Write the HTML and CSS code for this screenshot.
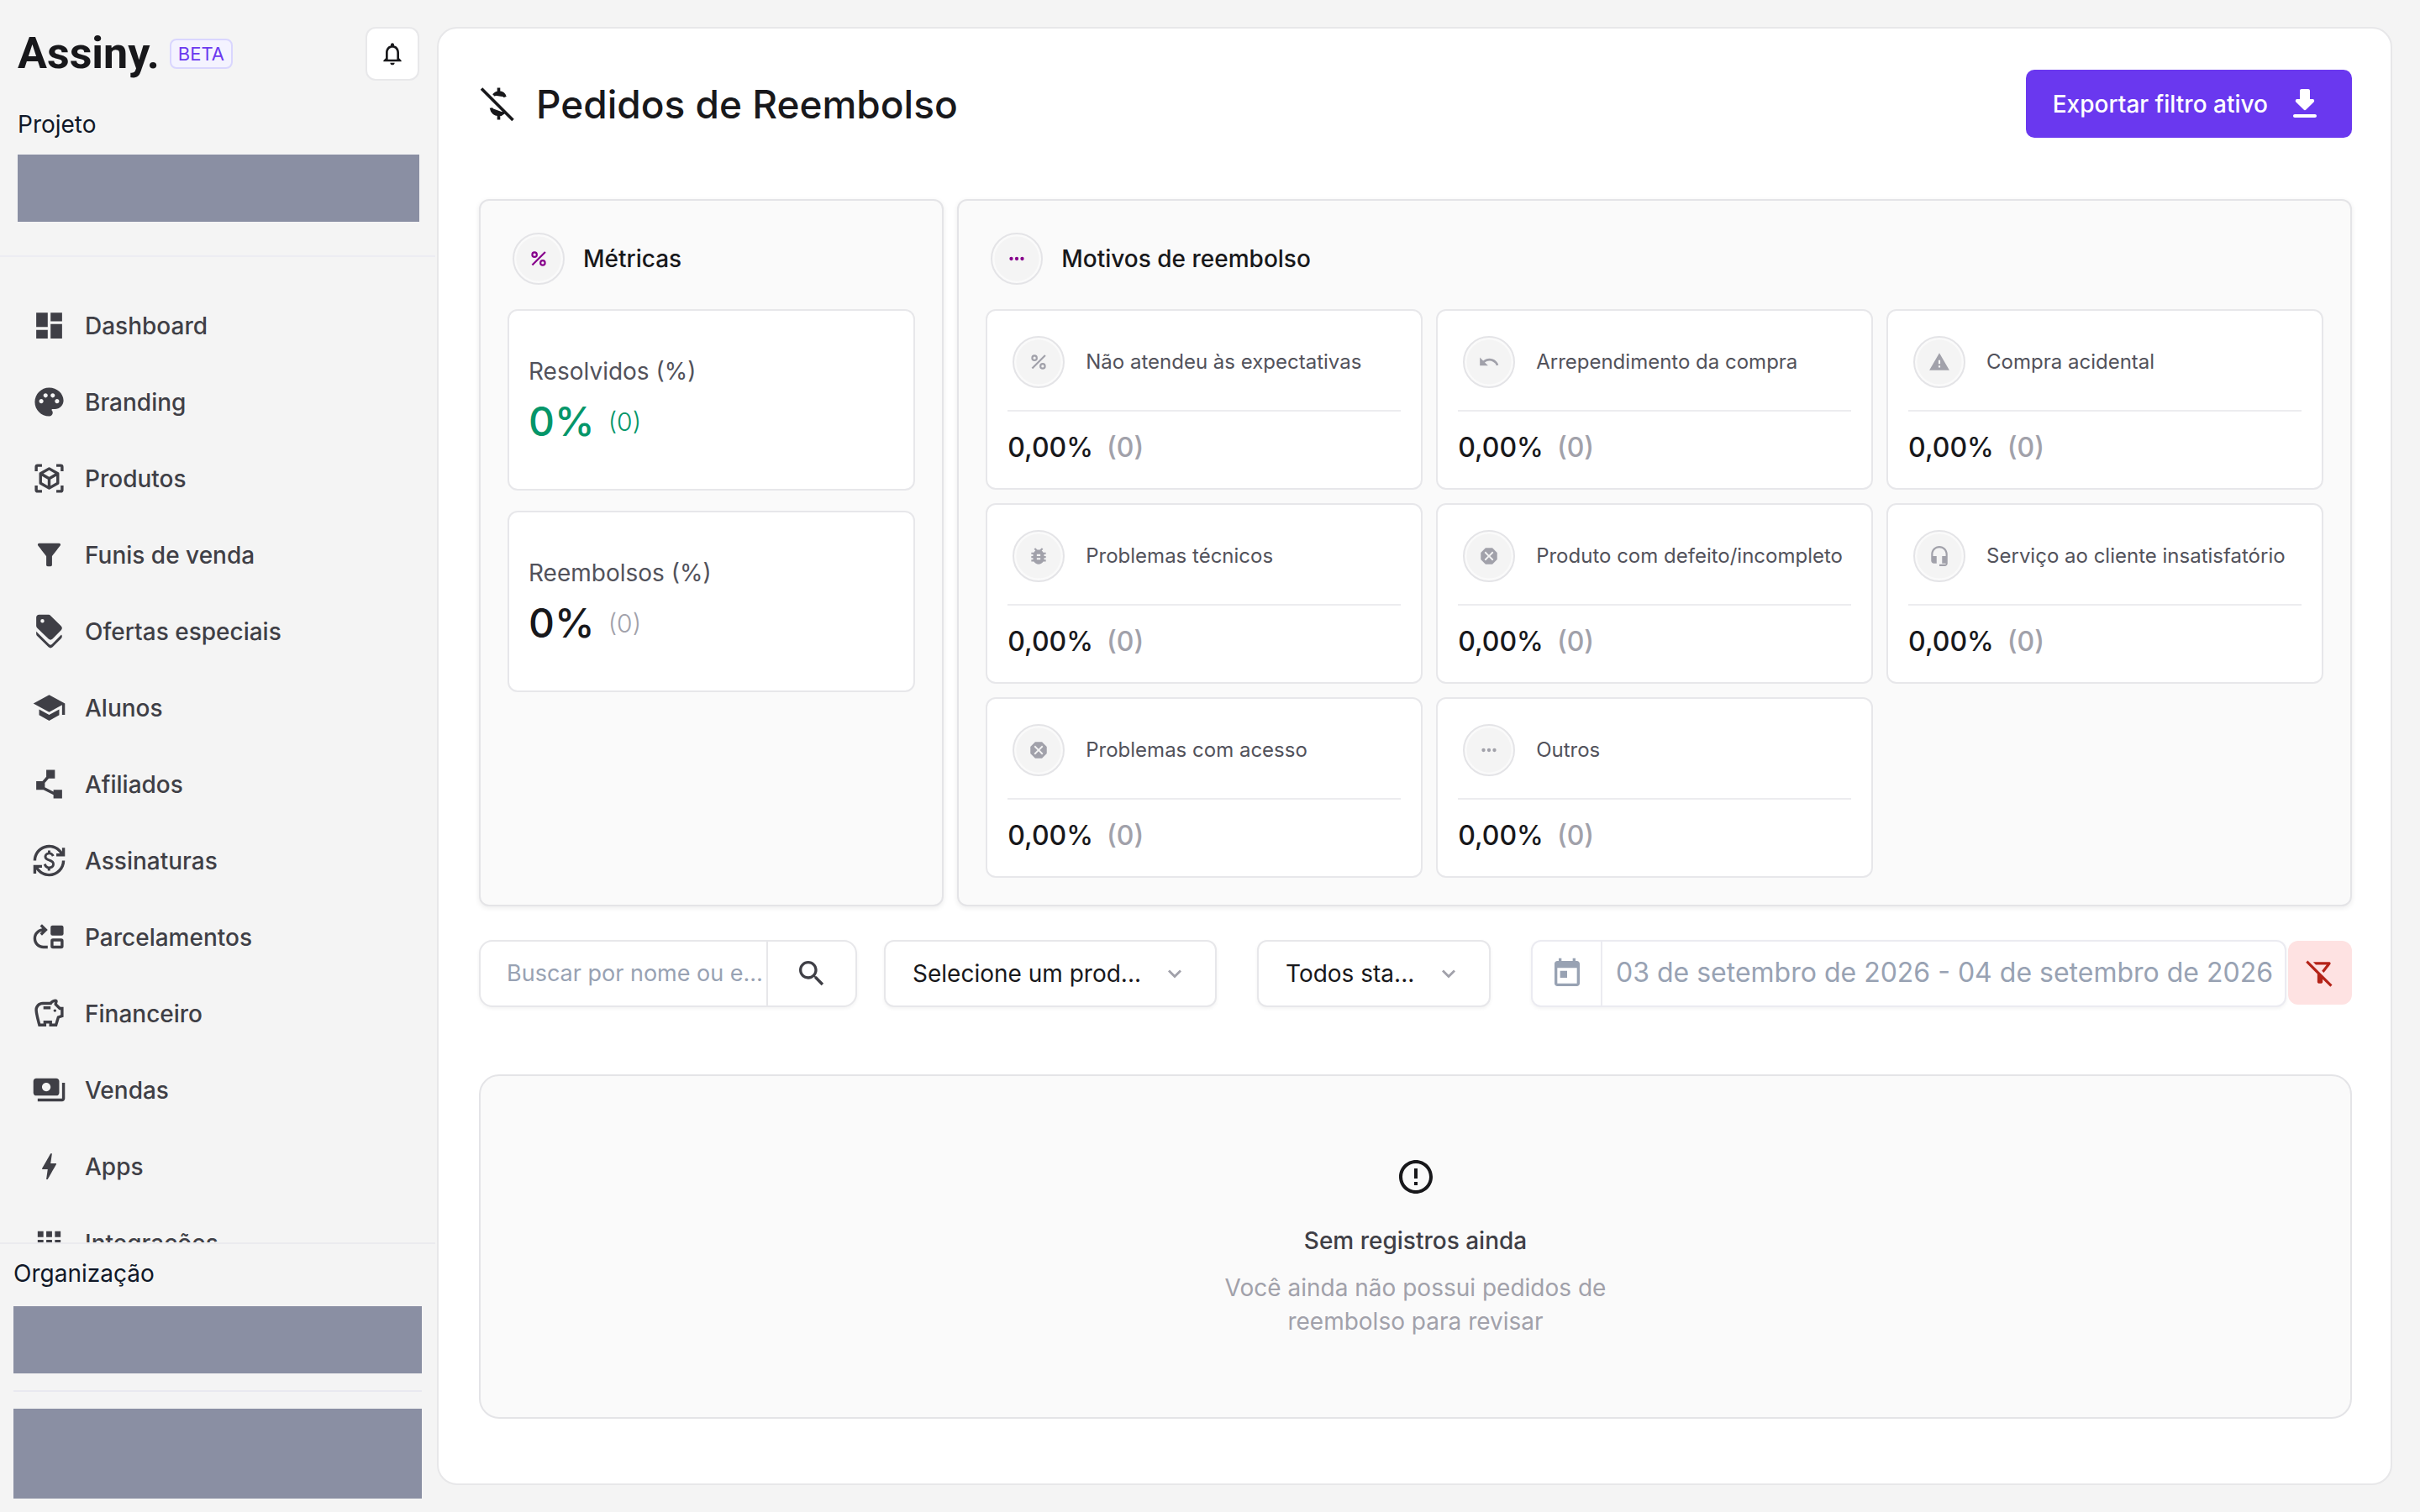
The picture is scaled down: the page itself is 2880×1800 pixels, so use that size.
FILE: index.html
```html
<!DOCTYPE html>
<html lang="pt-BR">
<head>
<meta charset="utf-8">
<meta name="viewport" content="width=device-width, initial-scale=1">
<title>Assiny - Pedidos de Reembolso</title>
<link rel="stylesheet" href="styles.css">
</head>
<body>
<svg class="sprite" aria-hidden="true">
  <symbol id="i-percent" viewBox="0 0 24 24"><path d="M5 19 19.300 4.700" stroke="currentColor" stroke-width="2" fill="none"/><circle cx="7.500" cy="7.500" r="2.500" fill="none" stroke="currentColor" stroke-width="2"/><circle cx="16.500" cy="16.500" r="2.500" fill="none" stroke="currentColor" stroke-width="2"/></symbol>
  <symbol id="i-more" viewBox="0 0 24 24"><circle cx="6" cy="12" r="2"/><circle cx="12" cy="12" r="2"/><circle cx="18" cy="12" r="2"/></symbol>
  <symbol id="i-undo" viewBox="0 0 24 24"><path d="M12.500 8c-2.650 0-5.050.99-6.900 2.600L2 7v9h9l-3.620-3.620c1.390-1.160 3.160-1.880 5.120-1.880 3.540 0 6.550 2.310 7.600 5.500l2.370-.78C21.080 11.030 17.150 8 12.500 8z"/></symbol>
  <symbol id="i-warning" viewBox="0 0 24 24"><path d="M1 21h22L12 2 1 21zm12-3h-2v-2h2v2zm0-4h-2v-4h2v4z"/></symbol>
  <symbol id="i-bug" viewBox="0 0 24 24"><path d="M20 8h-2.810c-.45-.78-1.070-1.450-1.820-1.960L17 4.410 15.590 3l-2.170 2.170C12.960 5.060 12.490 5 12 5c-.49 0-.96.06-1.410.17L8.410 3 7 4.410l1.620 1.630C7.880 6.550 7.260 7.220 6.810 8H4v2h2.090c-.05.33-.09.66-.09 1v1H4v2h2v1c0 .34.04.67.09 1H4v2h2.810c1.040 1.790 2.970 3 5.190 3s4.150-1.210 5.190-3H20v-2h-2.090c.05-.33.09-.66.09-1v-1h2v-2h-2v-1c0-.34-.04-.67-.09-1H20V8zm-6 8h-4v-2h4v2zm0-4h-4v-2h4v2z"/></symbol>
  <symbol id="i-dangerous" viewBox="0 0 24 24"><path d="M15.730 3H8.270L3 8.270v7.460L8.270 21h7.460L21 15.730V8.270L15.730 3zM17 15.740 15.740 17 12 13.260 8.260 17 7 15.740 10.740 12 7 8.260 8.260 7 12 10.740 15.740 7 17 8.260 13.260 12 17 15.740z"/></symbol>
  <symbol id="i-headset" viewBox="0 0 24 24"><path d="M12 1c-4.970 0-9 4.030-9 9v7c0 1.660 1.340 3 3 3h3v-8H5v-2c0-3.870 3.130-7 7-7s7 3.130 7 7v2h-4v8h4v1h-7v2h6c1.660 0 3-1.340 3-3V10c0-4.970-4.030-9-9-9z"/></symbol>
  <symbol id="i-chevron" viewBox="0 0 24 24"><path d="M5 8.500 12 15.500 19 8.500" fill="none" stroke="currentColor" stroke-width="2.800"/></symbol>
</svg>

<div class="app">
  <aside class="sidebar">
    <header class="side-top">
      <div class="brand-row">
        <a class="brand" href="#">Assiny.</a>
        <span class="beta">BETA</span>
        <button class="bell" type="button" aria-label="Notificações"><svg viewBox="0 0 24 24"><path d="M12 22c1.100 0 2-.9 2-2h-4c0 1.100.9 2 2 2zm6-6v-5c0-3.070-1.630-5.640-4.500-6.320V4c0-.83-.67-1.500-1.500-1.500s-1.500.67-1.500 1.500v.68C7.640 5.360 6 7.920 6 11v5l-2 2v1h16v-1l-2-2zm-2 1H8v-6c0-2.480 1.510-4.500 4-4.500s4 2.020 4 4.500v6z"/></svg></button>
      </div>
      <p class="side-label">Projeto</p>
      <div class="mask"></div>
    </header>

    <nav class="nav">
      <a href="#"><svg viewBox="0 0 24 24"><path d="M3 13h8V3H3v10zm0 8h8v-6H3v6zm10 0h8V11h-8v10zm0-18v6h8V3h-8z"/></svg>Dashboard</a>
      <a href="#"><svg viewBox="0 0 24 24"><path d="M12 2C6.490 2 2 6.490 2 12s4.490 10 10 10c1.380 0 2.500-1.120 2.500-2.500 0-.61-.23-1.200-.64-1.670-.08-.1-.13-.21-.13-.33 0-.28.22-.5.5-.5H16c3.310 0 6-2.690 6-6 0-4.960-4.490-9-10-9zm5.500 11c-.83 0-1.500-.67-1.500-1.500s.67-1.500 1.500-1.500 1.500.67 1.500 1.500-.67 1.500-1.500 1.500zm-3-4c-.83 0-1.500-.67-1.500-1.500S13.670 6 14.500 6s1.500.67 1.500 1.500S15.330 9 14.500 9zM5 11.500c0-.83.67-1.500 1.500-1.500s1.500.67 1.500 1.500S7.330 13 6.500 13 5 12.330 5 11.500zm6-4c0 .83-.67 1.500-1.500 1.500S8 8.330 8 7.500 8.670 6 9.500 6s1.500.67 1.500 1.500z"/></svg>Branding</a>
      <a href="#"><svg viewBox="0 0 24 24"><g fill="none" stroke="currentColor" stroke-width="2"><path d="M7 3H4Q3 3 3 4v3M17 3h3q1 0 1 1v3M7 21H4q-1 0-1-1v-3M17 21h3q1 0 1-1v-3"/><path d="M12 5.200 18 8.600v6.800L12 18.800 6 15.400V8.600zM6 8.600l6 3.500 6-3.500M12 12.100v6.700" stroke-linejoin="round"/></g></svg>Produtos</a>
      <a href="#"><svg viewBox="0 0 24 24"><path d="M4.250 5.610C6.270 8.200 10 13 10 13v6c0 .55.45 1 1 1h2c.55 0 1-.45 1-1v-6s3.720-4.800 5.740-7.390A.998.998 0 0 0 18.950 4H5.040c-.83 0-1.300.95-.79 1.610z"/></svg>Funis de venda</a>
      <a href="#"><svg viewBox="0 0 24 24"><path fill-rule="evenodd" d="M5 .5h6.600c.6 0 1 .2 1.400.6l7.300 7.300c.9.9.9 1.900 0 2.800l-5.900 6.100c-.9.900-2 .9-2.900 0L3.600 9.600C3.200 9.200 3 8.700 3 8.200V2.500c0-1.200.8-2 2-2zm2.300 3a1.300 1.300 0 1 0 0 2.600 1.300 1.300 0 0 0 0-2.600zM3 12.200l9 8.900c.6.6 1.300.6 1.900 0l6.600-6.700c.7.9.6 1.900-.2 2.700l-5.900 5.900c-.9.9-2 .9-2.900 0L3.600 15.200c-.4-.4-.6-.9-.6-1.500z"/></svg>Ofertas especiais</a>
      <a href="#"><svg viewBox="0 0 24 24"><path d="M5 13.180v4L12 21l7-3.820v-4L12 17l-7-3.820zM12 3L1 9l11 6 9-4.910V17h2V9L12 3z"/></svg>Alunos</a>
      <a href="#"><svg viewBox="0 0 24 24"><path d="M15 16v1.260l-6-3v-3.170L11.700 8H16V2h-6v4.900L7.300 10H3v6h5l7 3.500V22h6v-6H15z"/></svg>Afiliados</a>
      <a href="#"><svg viewBox="0 0 24 24"><path d="M12.890 11.100c-1.780-.59-2.640-.96-2.640-1.900 0-1.020 1.110-1.390 1.810-1.390 1.310 0 1.790.99 1.900 1.340l1.580-.67c-.15-.44-.82-1.910-2.660-2.230V5h-1.750v1.260c-2.600.56-2.620 2.850-2.620 2.960 0 2.270 2.250 2.910 3.350 3.310 1.580.56 2.280 1.070 2.280 2.030 0 1.130-1.050 1.610-1.980 1.610-1.820 0-2.340-1.870-2.400-2.090l-1.660.67c.63 2.190 2.280 2.780 2.900 2.960V19h1.750v-1.240c.52-.09 3.020-.59 3.020-3.220.01-1.390-.6-2.610-2.880-3.440zM3 21H1v-6h6v2H4.520c1.610 2.410 4.360 4 7.480 4 4.970 0 9-4.030 9-9h2c0 6.080-4.920 11-11 11-3.720 0-7.010-1.850-9-4.670V21zm-2-9C1 5.920 5.920 1 12 1c3.720 0 7.010 1.850 9 4.670V3h2v6h-6V7h2.480C17.870 4.590 15.120 3 12 3c-4.970 0-9 4.030-9 9H1z"/></svg>Assinaturas</a>
      <a href="#"><svg viewBox="0 0 24 24"><path d="M3 13c0-2.450 1.760-4.470 4.080-4.910L5.590 9.580 7 11l4-4.010L7 3 5.590 4.410l1.580 1.580v.06C3.700 6.460 1 9.420 1 13c0 3.870 3.130 7 7 7h3v-2H8c-2.760 0-5-2.240-5-5z"/><rect x="13" y="4" width="9" height="7" rx="1.300"/><rect x="14" y="14" width="7" height="5" rx=".6" fill="none" stroke="currentColor" stroke-width="2"/></svg>Parcelamentos</a>
      <a href="#"><svg viewBox="0 0 24 24"><path fill-rule="evenodd" d="M15 10c0-.55.45-1 1-1s1 .45 1 1-.45 1-1 1-1-.45-1-1zM8 9h5V7H8v2zm14-1.500v6.970l-2.820.94L17.500 21H12v-2h-2v2H4.500S2 12.540 2 9.500 4.460 4 7.500 4h5c.91-1.210 2.360-2 4-2 .83 0 1.500.67 1.500 1.500 0 .21-.04.41-.12.59-.14.34-.26.73-.32 1.150l2.270 2.260H22zm-2 2h-1L15.500 6c0-.65.09-1.290.26-1.910-.97.25-1.760.97-2.090 1.910H7.500C5.570 6 4 7.570 4 9.500c0 1.880 1.220 6.650 2.010 9.500H8v-2h6v2h2.010l1.550-5.150 2.440-.82V9.500z"/></svg>Financeiro</a>
      <a href="#"><svg viewBox="0 0 24 24"><path d="M19 14V6c0-1.100-.9-2-2-2H3c-1.100 0-2 .9-2 2v8c0 1.100.9 2 2 2h14c1.100 0 2-.9 2-2zm-9-1c-1.660 0-3-1.340-3-3s1.340-3 3-3 3 1.340 3 3-1.340 3-3 3zm13-6v11c0 1.100-.9 2-2 2H4v-2h17V7h2z"/></svg>Vendas</a>
      <a href="#"><svg viewBox="0 0 24 24"><path d="M11 21h-1l1-7H7.500c-.58 0-.57-.32-.38-.66C8.480 10.940 10.420 7.540 13 3h1l-1 7h3.500c.49 0 .56.33.47.51C12.960 17.550 11 21 11 21z"/></svg>Apps</a>
      <a href="#"><svg viewBox="0 0 24 24"><path d="M4 4h4v4H4zM10 4h4v4h-4zM16 4h4v4h-4zM4 10h4v4H4zM10 10h4v4h-4zM16 10h4v4h-4zM4 16h4v4H4zM10 16h4v4h-4zM16 16h4v4h-4z"/></svg>Integrações</a>
    </nav>

    <footer class="side-foot">
      <p class="side-label">Organização</p>
      <div class="mask"></div>
      <hr>
      <div class="mask mask-tall"></div>
    </footer>
  </aside>

  <main class="panel">
    <header class="page-head">
      <svg class="page-icon" viewBox="0 0 44 44" fill="none" stroke="currentColor" stroke-width="3.600"><path d="M3 3.600 40.500 41M23.500 2.500V9M17.500 11.500Q20.500 8 24 8q5.500 0 7 5.500M23.500 33v7.500M14.500 26.500q1.500 7.500 9 8 3.500 0 6-2.500"/></svg>
      <h1>Pedidos de Reembolso</h1>
      <button class="export" type="button">Exportar filtro ativo<svg viewBox="0 0 24 24"><path d="M16.590 9H15V4c0-.55-.45-1-1-1h-4c-.55 0-1 .45-1 1v5H7.410c-.89 0-1.340 1.080-.71 1.710l4.590 4.590c.39.39 1.020.39 1.410 0l4.590-4.590c.63-.63.19-1.710-.7-1.710zM5 19c0 .55.45 1 1 1h12c.55 0 1-.45 1-1s-.45-1-1-1H6c-.55 0-1 .45-1 1z"/></svg></button>
    </header>

    <div class="summary">
      <section class="card">
        <header class="card-head"><span class="disc disc-accent"><svg><use href="#i-percent"/></svg></span><h2>Métricas</h2></header>
        <div class="metrics">
          <div class="tile metric metric-ok"><p>Resolvidos (%)</p><div class="metric-value"><strong>0%</strong><span>(0)</span></div></div>
          <div class="tile metric"><p>Reembolsos (%)</p><div class="metric-value"><strong>0%</strong><span>(0)</span></div></div>
        </div>
      </section>

      <section class="card">
        <header class="card-head"><span class="disc disc-accent"><svg><use href="#i-more"/></svg></span><h2>Motivos de reembolso</h2></header>
        <div class="reasons">
          <div class="tile reason"><div class="reason-head"><span class="disc"><svg><use href="#i-percent"/></svg></span><p>Não atendeu às expectativas</p></div><div class="reason-value"><strong>0,00%</strong><span>(0)</span></div></div>
          <div class="tile reason"><div class="reason-head"><span class="disc"><svg><use href="#i-undo"/></svg></span><p>Arrependimento da compra</p></div><div class="reason-value"><strong>0,00%</strong><span>(0)</span></div></div>
          <div class="tile reason"><div class="reason-head"><span class="disc"><svg><use href="#i-warning"/></svg></span><p>Compra acidental</p></div><div class="reason-value"><strong>0,00%</strong><span>(0)</span></div></div>
          <div class="tile reason"><div class="reason-head"><span class="disc"><svg><use href="#i-bug"/></svg></span><p>Problemas técnicos</p></div><div class="reason-value"><strong>0,00%</strong><span>(0)</span></div></div>
          <div class="tile reason"><div class="reason-head"><span class="disc"><svg><use href="#i-dangerous"/></svg></span><p>Produto com defeito/incompleto</p></div><div class="reason-value"><strong>0,00%</strong><span>(0)</span></div></div>
          <div class="tile reason"><div class="reason-head"><span class="disc"><svg><use href="#i-headset"/></svg></span><p>Serviço ao cliente insatisfatório</p></div><div class="reason-value"><strong>0,00%</strong><span>(0)</span></div></div>
          <div class="tile reason"><div class="reason-head"><span class="disc"><svg><use href="#i-dangerous"/></svg></span><p>Problemas com acesso</p></div><div class="reason-value"><strong>0,00%</strong><span>(0)</span></div></div>
          <div class="tile reason"><div class="reason-head"><span class="disc"><svg><use href="#i-more"/></svg></span><p>Outros</p></div><div class="reason-value"><strong>0,00%</strong><span>(0)</span></div></div>
        </div>
      </section>
    </div>

    <form class="filters">
      <div class="filter-pair">
        <div class="field search">
          <input type="text" placeholder="Buscar por nome ou e…" aria-label="Buscar por nome ou e-mail">
          <button type="button" aria-label="Buscar"><svg viewBox="0 0 24 24"><path d="M15.500 14h-.79l-.28-.27C15.410 12.590 16 11.110 16 9.500 16 5.910 13.090 3 9.500 3S3 5.910 3 9.500 5.910 16 9.500 16c1.610 0 3.090-.59 4.230-1.570l.27.28v.79l5 4.990L20.490 19l-4.990-5zm-6 0C7.010 14 5 11.990 5 9.500S7.010 5 9.500 5 14 7.010 14 9.500 11.990 14 9.500 14z"/></svg></button>
        </div>
        <div class="field choice choice-product">
          <select aria-label="Produto"><option>Selecione um prod...</option></select>
          <svg><use href="#i-chevron"/></svg>
        </div>
      </div>
      <div class="field choice choice-status">
        <select aria-label="Status"><option>Todos sta...</option></select>
        <svg><use href="#i-chevron"/></svg>
      </div>
      <div class="period">
        <div class="field dates">
          <button type="button" aria-label="Abrir calendário"><svg viewBox="0 0 24 24"><path fill-rule="evenodd" d="M19 3h-1V1h-2v2H8V1H6v2H5c-1.110 0-2 .9-2 2v14c0 1.100.89 2 2 2h14c1.100 0 2-.9 2-2V5c0-1.100-.9-2-2-2zm0 16H5V8h14v11zM7 10h5v5H7z"/></svg></button>
          <input type="text" readonly aria-label="Período" value="03 de setembro de 2026 - 04 de setembro de 2026">
        </div>
        <button class="clear" type="button" aria-label="Limpar filtros"><svg viewBox="0 0 24 24"><path d="M16.950 6l-3.570 4.550 1.430 1.430c1.030-1.310 4.980-6.370 4.980-6.370A.998.998 0 0 0 19 4H6.830l2 2h8.120zM2.810 2.810 1.390 4.220 10 13v6c0 .55.45 1 1 1h2c.55 0 1-.45 1-1v-2.170l5.780 5.780 1.410-1.410L2.810 2.810z"/></svg></button>
      </div>
    </form>

    <section class="empty">
      <svg viewBox="0 0 24 24"><path d="M11 15h2v2h-2zm0-8h2v6h-2zm.99-5C6.470 2 2 6.480 2 12s4.470 10 9.990 10C17.520 22 22 17.520 22 12S17.520 2 11.990 2zM12 20c-4.420 0-8-3.580-8-8s3.580-8 8-8 8 3.580 8 8-3.580 8-8 8z"/></svg>
      <h3>Sem registros ainda</h3>
      <p>Você ainda não possui pedidos de reembolso para revisar</p>
    </section>
  </main>
</div>
</body>
</html>
```
FILE: styles.css
```css
* { box-sizing: border-box; }

body, h1, h2, h3, p { margin: 0; }

body {
  background: #f4f4f4;
  color: #18181b;
  font: 400 28px/40px Inter, "Liberation Sans", sans-serif;
}

svg { display: block; flex: none; fill: currentColor; }
button, input, select { font: inherit; color: inherit; margin: 0; border: 0; background: none; outline: 0; }
button { padding: 0; cursor: pointer; }
a { color: inherit; text-decoration: none; }
.sprite { display: none; }

.app {
  display: grid;
  grid-template-columns: 518px minmax(0, 1fr);
  column-gap: 2px;
  min-height: 100vh;
}

/* Sidebar */
.sidebar {
  display: flex;
  flex-direction: column;
  height: 100vh;
  position: sticky;
  top: 0;
}

.side-top {
  padding: 32px 19px 40px 21px;
  border-bottom: 2px solid #ececf2;
}

.brand-row { display: flex; align-items: center; height: 64px; }
.brand { font: 700 52px/64px Roboto, Inter, sans-serif; }
.beta {
  margin-left: 12px;
  padding: 0 8px;
  border: 2px solid #d9d6fe;
  border-radius: 8px;
  background: #f4f3ff;
  color: #6b39ef;
  font-size: 22px;
  line-height: 32px;
}

.bell {
  display: grid;
  place-items: center;
  width: 64px;
  height: 64px;
  margin-left: auto;
  border: 2px solid #e8e8ea;
  border-radius: 12px;
  background: #fff;
}
.bell svg { width: 32px; height: 32px; }

.side-label { color: #101828; }
.side-top .side-label { margin: 32px 0 16px; }
.mask { height: 80px; background: #8a8fa3; }
.mask-tall { height: 107px; }

.nav {
  flex: 1;
  min-height: 0;
  overflow: hidden;
  padding-top: 36px;
  color: #3f3f46;
  font-weight: 500;
}
.nav a {
  display: flex;
  align-items: center;
  gap: 22px;
  height: 91px;
  padding-left: 38px;
}
.nav svg { width: 41px; height: 41px; }

.side-foot {
  padding: 15px 16px 16px;
  border-top: 2px solid #ebebee;
}
.side-foot .side-label { margin-bottom: 19px; }
.side-foot hr { margin: 20px 0; border: 0; border-top: 2px solid #e9e9f0; }

/* Main panel */
.panel {
  margin: 32px 33px 32px 0;
  padding: 49px 46px 48px 48px;
  border: 2px solid #e7e7e9;
  border-radius: 24px;
  background: #fff;
}

.page-head { display: flex; align-items: center; margin-bottom: 73px; }
.page-icon { width: 44px; height: 44px; }
.page-head h1 { margin-left: 24px; font-size: 46px; line-height: 64px; font-weight: 500; }
.export {
  display: flex;
  align-items: center;
  gap: 20px;
  height: 81px;
  margin-left: auto;
  padding: 0 32px;
  border-radius: 10px;
  background: #6a38ef;
  color: #fff;
  font-weight: 500;
}
.export svg { width: 48px; height: 48px; }

.summary {
  display: grid;
  grid-template-columns: minmax(0, 1fr) minmax(0, 3fr);
  gap: 16px;
}
.card {
  padding: 38px 32px 32px;
  border: 2px solid #e4e4e7;
  border-radius: 12px;
  background: #fafafa;
  box-shadow: 0 2px 6px rgb(0 0 0 / 8%);
}
.card-head { display: flex; align-items: center; gap: 22px; margin: 0 6px 29px; }
.card-head h2 { font-size: 28px; line-height: 40px; font-weight: 500; }

.disc {
  display: grid;
  place-items: center;
  flex: none;
  width: 62px;
  height: 62px;
  border: 2px solid #e4e4e7;
  border-radius: 50%;
  background: radial-gradient(circle, #f4f4f4 26px, #fafafa 27px);
  color: #a1a1aa;
}
.disc svg { width: 26px; height: 26px; }
.disc-accent { color: #86008b; }

.tile {
  border: 2px solid #e7e7ea;
  border-radius: 12px;
  background: #fff;
}

.metrics { display: grid; gap: 24px; }
.metric {
  display: flex;
  flex-direction: column;
  justify-content: center;
  gap: 10px;
  height: 216px;
  padding: 2px 23px 0;
}
.metric p { color: #52525b; }
.metric-value { display: flex; align-items: center; gap: 16px; font-size: 30px; line-height: 60px; }
.metric-value strong { font-size: 48px; font-weight: 500; }
.metric-value span { color: #a1a1aa; font-weight: 300; }
.metric-ok .metric-value, .metric-ok .metric-value span { color: #059669; }

.reasons {
  display: grid;
  grid-template-columns: repeat(3, minmax(0, 1fr));
  gap: 16px;
}
.reason { height: 215px; padding: 30px 24px 0; }
.reason-head {
  display: flex;
  align-items: center;
  gap: 25px;
  padding: 0 0 26px 6px;
  border-bottom: 2px solid #ececef;
  color: #52525b;
  font-size: 24px;
  white-space: nowrap;
}
.reason-value {
  display: flex;
  gap: 16px;
  margin-top: 23px;
  font-size: 32px;
  line-height: 40px;
  font-weight: 500;
}
.reason-value strong { font-weight: 500; }
.reason-value span { color: #a1a1aa; }

/* Filters */
.filters { display: flex; gap: 48px; margin: 40px 0 80px; }
.filter-pair { display: flex; gap: 32px; }
.field {
  display: flex;
  height: 80px;
  border: 2px solid #e7e7ea;
  border-radius: 12px;
  background: #fff;
  box-shadow: 0 2px 4px rgb(0 0 0 / 5%);
}
.field input { min-width: 0; flex: 1; padding: 0; }
.field button { display: grid; place-items: center; }

.search { width: 450px; border-radius: 16px; }
.search input { padding-left: 31px; font-size: 27px; }
.search input::placeholder { color: #98a2b3; opacity: 1; }
.search button { width: 106px; border-left: 2px solid #e7e7ea; color: #3f3f46; }
.search svg { width: 40px; height: 40px; }

.choice { align-items: center; padding-right: 36px; }
.choice select { appearance: none; flex: 1; min-width: 0; height: 100%; padding: 0 0 0 32px; }
.choice svg { width: 24px; height: 24px; color: #a1a1aa; }
.choice-product { width: 396px; }
.choice-status { width: 278px; }

.period { display: flex; flex: 1; gap: 2px; min-width: 0; }
.dates { flex: 1; border-color: #ebebf1; color: #98a2b3; font-size: 32px; }
.dates button { width: 83px; border-right: 2px solid #ebebf1; }
.dates svg { width: 40px; height: 40px; }
.dates input { padding: 0 0 2px 16px; }
.clear {
  display: grid;
  place-items: center;
  width: 76px;
  height: 76px;
  margin-top: 1px;
  border-radius: 12px;
  background: #fee2e2;
  color: #b42318;
}
.clear svg { width: 38px; height: 38px; }

/* Empty state */
.empty {
  display: flex;
  flex-direction: column;
  align-items: center;
  padding: 96px 24px 94px;
  border: 2px solid #e4e4e7;
  border-radius: 24px;
  background: #fafafa;
  text-align: center;
}
.empty svg { width: 48px; height: 48px; }
.empty h3 { margin: 32px 0 16px; color: #3f3f46; font-size: 28px; font-weight: 500; }
.empty p { max-width: 480px; color: #a1a1aa; }
```
